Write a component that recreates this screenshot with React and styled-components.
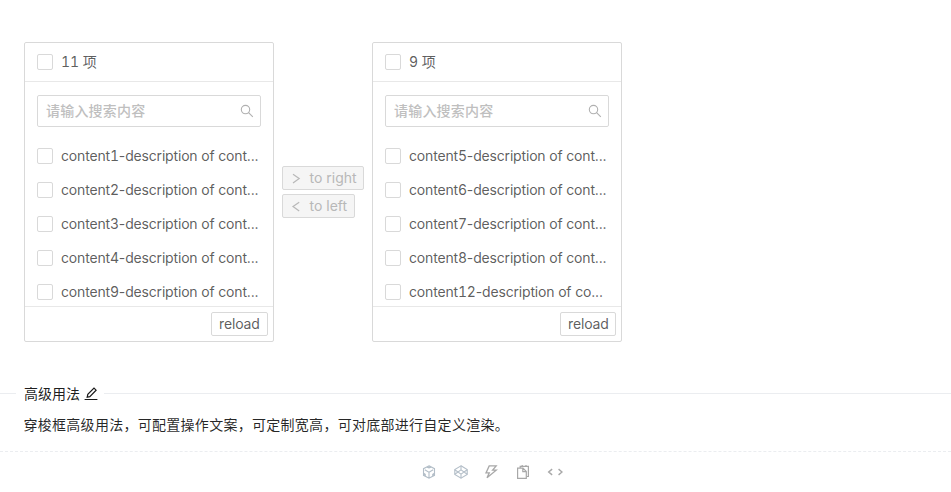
import React from "react";
import styled, { createGlobalStyle } from "styled-components";

const GlobalStyle = createGlobalStyle`
  *, *::before, *::after { box-sizing: border-box; }
  body {
    margin: 0;
    background: #fff;
    color: rgba(0, 0, 0, 0.65);
    font: 14px/20px Inter, "Noto Sans CJK SC", sans-serif;
    overflow: hidden;
  }
  button, input { font: inherit; }
`;

const Page = styled.main`
  display: flex;
  flex-direction: column;
  width: 951px;
  height: 492px;
`;

const Transfer = styled.section`
  display: flex;
  align-items: flex-start;
  padding: 42px 24px 0;
  height: 393px;
`;

const Panel = styled.div`
  display: flex;
  flex-direction: column;
  width: 250px;
  height: 300px;
  border: 1px solid #d9d9d9;
  border-radius: 2px;
  overflow: hidden;
`;

const PanelHeader = styled.header`
  display: flex;
  align-items: center;
  flex: none;
  height: 39px;
  padding: 0 12px;
  border-bottom: 1px solid #e8e8e8;
`;

const Checkbox = styled.span`
  flex: none;
  width: 16px;
  height: 16px;
  margin-right: 8px;
  border: 1px solid #d9d9d9;
  border-radius: 2px;
  background: #fff;
`;

const Count = styled.span`
  font-feature-settings: "tnum";
  letter-spacing: -0.1px;
  white-space: pre;
`;

const Digits = styled.span`
  font-feature-settings: "tnum";
`;

const Search = styled.label`
  display: flex;
  align-items: center;
  flex: none;
  height: 32px;
  margin: 13px 12px 12px;
  padding: 0 6px 0 8px;
  border: 1px solid #d9d9d9;
  border-radius: 2px;
  color: #b0b0b0;
`;

const SearchInput = styled.input`
  flex: 1;
  min-width: 0;
  padding: 0;
  border: 0;
  outline: 0;
  background: none;
  letter-spacing: 0.2px;
  &::placeholder { color: #bfbfbf; opacity: 1; font-weight: 500; }
`;

const List = styled.ul`
  flex: 1;
  min-height: 0;
  margin: 0;
  padding: 0;
  list-style: none;
  overflow: hidden;
`;

const Item = styled.li`
  display: flex;
  align-items: center;
  height: 34px;
  padding: 0 12px;
`;

const ItemText = styled.span`
  white-space: nowrap;
  letter-spacing: -0.17px;
`;

const PanelFooter = styled.footer`
  display: flex;
  justify-content: flex-end;
  flex: none;
  height: 35px;
  padding: 5px 5px 0 0;
  border-top: 1px solid #e8e8e8;
`;

const Button = styled.button`
  display: flex;
  align-items: center;
  justify-content: flex-start;
  width: ${(p) => p.$width}px;
  height: 24px;
  padding: 0 7px;
  border: 1px solid #d9d9d9;
  border-radius: 2px;
  background: ${(p) => (p.disabled ? "#f5f5f5" : "#fff")};
  color: ${(p) => (p.disabled ? "#b8b8b8" : "rgba(0, 0, 0, 0.65)")};
  letter-spacing: ${(p) => (p.disabled ? 0 : -0.15)}px;
  line-height: 20px;
  white-space: nowrap;
  svg { flex: none; margin-right: 7.5px; }
`;

const Operations = styled.div`
  display: flex;
  flex-direction: column;
  gap: 4px;
  width: 82px;
  margin: 124px 8px 0;
`;

const Meta = styled.section`
  display: flex;
  flex-direction: column;
  height: 59px;
  border-bottom: 1px dashed #ebedf0;
  color: rgba(0, 0, 0, 0.85);
`;

const TitleRow = styled.div`
  display: flex;
  align-items: center;
  height: 20px;
  margin-top: -10px;
  &::before { content: ""; width: 16px; height: 1px; background: #ebedf0; }
  &::after { content: ""; flex: 1; height: 1px; background: #ebedf0; }
`;

const Title = styled.h2`
  display: flex;
  align-items: center;
  gap: 4px;
  margin: 0;
  padding: 2px 6px 0 8px;
  color: rgba(0, 0, 0, 0.9);
  font-size: 14px;
  font-weight: 400;
  line-height: 20px;
`;

const Description = styled.p`
  margin: 12px 0 0 23.5px;
  letter-spacing: 0.28px;
  line-height: 20px;
  white-space: nowrap;
`;

const Actions = styled.nav`
  display: flex;
  justify-content: center;
  gap: 16px;
  padding: 12px 0 0 33px;
`;

const Action = styled.span`
  display: flex;
  width: 16px;
  height: 16px;
  margin-left: ${(p) => p.$nudge || 0}px;
  align-items: center;
  justify-content: center;
  color: ${(p) => p.$tint || "#a8a8a8"};
`;

const Svg = ({ size = 14, w = 1, children, vb = 14 }) => (
  <svg width={size} height={size} viewBox={`0 0 ${vb} ${vb}`} fill="none" stroke="currentColor" strokeWidth={w}>
    {children}
  </svg>
);

const SearchIcon = () => (
  <Svg w={1.1}><circle cx="5.5" cy="5.6" r="4.2" /><path d="M8.6 8.7 12.8 12.8" /></Svg>
);
const RightIcon = () => (
  <Svg size={12} vb={12} w={1.2}><path d="M3 2.2 9.2 6.6 3 11" /></Svg>
);
const LeftIcon = () => (
  <Svg size={12} vb={12} w={1.2}><path d="M9.2 2.2 3 6.6 9.2 11" /></Svg>
);
const EditIcon = () => (
  <Svg w={1.2}><path d="M.6 12.5h12.8M3.2 10.2l.6-2.8L10 1.1l2.1 2.1-6.3 6.4z" /></Svg>
);
const BoxIcon = () => (
  <Svg w={1.1}>
    <path d="M7 .8 12.5 3.7v6.6L7 13.2 1.5 10.3V3.7zM7 13V7.2L2.8 4.8M7 7.2l4.2-2.4" />
    <path d="M1.5 7.6 3.8 9v2.6L1.5 10.3zM12.5 7.6 10.2 9v2.6l2.3-1.3zM4.2 2.4 7 .9l2.8 1.5L7 3.6z" fill="currentColor" stroke="none" />
  </Svg>
);
const CodepenIcon = () => (
  <Svg w={1.1}>
    <path d="M7 .8 13.2 4.6v4.8L7 13.2.8 9.4V4.6z" />
    <path d="M7 .8v4M7 9.2v4M.8 4.8 7 9.2l6.2-4.4M.8 9.2 7 4.8l6.2 4.4" />
  </Svg>
);
const BoltIcon = () => (
  <Svg w={1.3}><path d="M5.2.9h7L8.6 5.2h3.6L3 12.8l2.3-4.9H2z" /></Svg>
);
const CopyIcon = () => (
  <Svg w={1.2}>
    <path d="M4.2 2.5V1.3h8.2v10.2H11M1.6 3.2H7l3.3 3.2v7H1.6zM6.8 3.3v3.3h3.4" />
    <path d="M6.2 0v1.7M10 0v1.7" />
  </Svg>
);
const CodeIcon = () => (
  <svg width="18" height="14" viewBox="0 0 18 14" fill="none" stroke="currentColor" strokeWidth="1.6">
    <path d="M5.8 3.8 1.9 7l3.9 3.2M13 3.8 16.9 7 13 10.2" />
  </svg>
);

const left = ["content1-description of cont...", "content2-description of cont...", "content3-description of cont...", "content4-description of cont...", "content9-description of cont..."];
const right = ["content5-description of cont...", "content6-description of cont...", "content7-description of cont...", "content8-description of cont...", "content12-description of co..."];

const TransferItem = ({ text }) => {
  const [, prefix, digits, rest] = text.match(/^(\D+)(\d+)(.*)$/);
  return (
    <Item>
      <Checkbox />
      <ItemText>{prefix}<Digits>{digits}</Digits>{rest}</ItemText>
    </Item>
  );
};

const TransferList = ({ count, items, reloadWidth }) => (
  <Panel>
    <PanelHeader><Checkbox /><Count>{count} 项</Count></PanelHeader>
    <Search><SearchInput placeholder="请输入搜索内容" /><SearchIcon /></Search>
    <List>
      {items.map((text) => <TransferItem key={text} text={text} />)}
    </List>
    <PanelFooter><Button $width={reloadWidth}>reload</Button></PanelFooter>
  </Panel>
);

export default function App() {
  return (
    <Page>
      <GlobalStyle />
      <Transfer>
        <TransferList count={11} items={left} reloadWidth={57} />
        <Operations>
          <Button disabled $width={82}><RightIcon />to right</Button>
          <Button disabled $width={73}><LeftIcon />to left</Button>
        </Operations>
        <TransferList count={9} items={right} reloadWidth={56} />
      </Transfer>
      <Meta>
        <TitleRow><Title>高级用法<EditIcon /></Title></TitleRow>
        <Description>穿梭框高级用法，可配置操作文案，可定制宽高，可对底部进行自定义渲染。</Description>
      </Meta>
      <Actions>
        <Action $tint="#b3bec8"><BoxIcon /></Action>
        <Action $tint="#b3bec8"><CodepenIcon /></Action>
        <Action $nudge={-2}><BoltIcon /></Action>
        <Action><CopyIcon /></Action>
        <Action><CodeIcon /></Action>
      </Actions>
    </Page>
  );
}
